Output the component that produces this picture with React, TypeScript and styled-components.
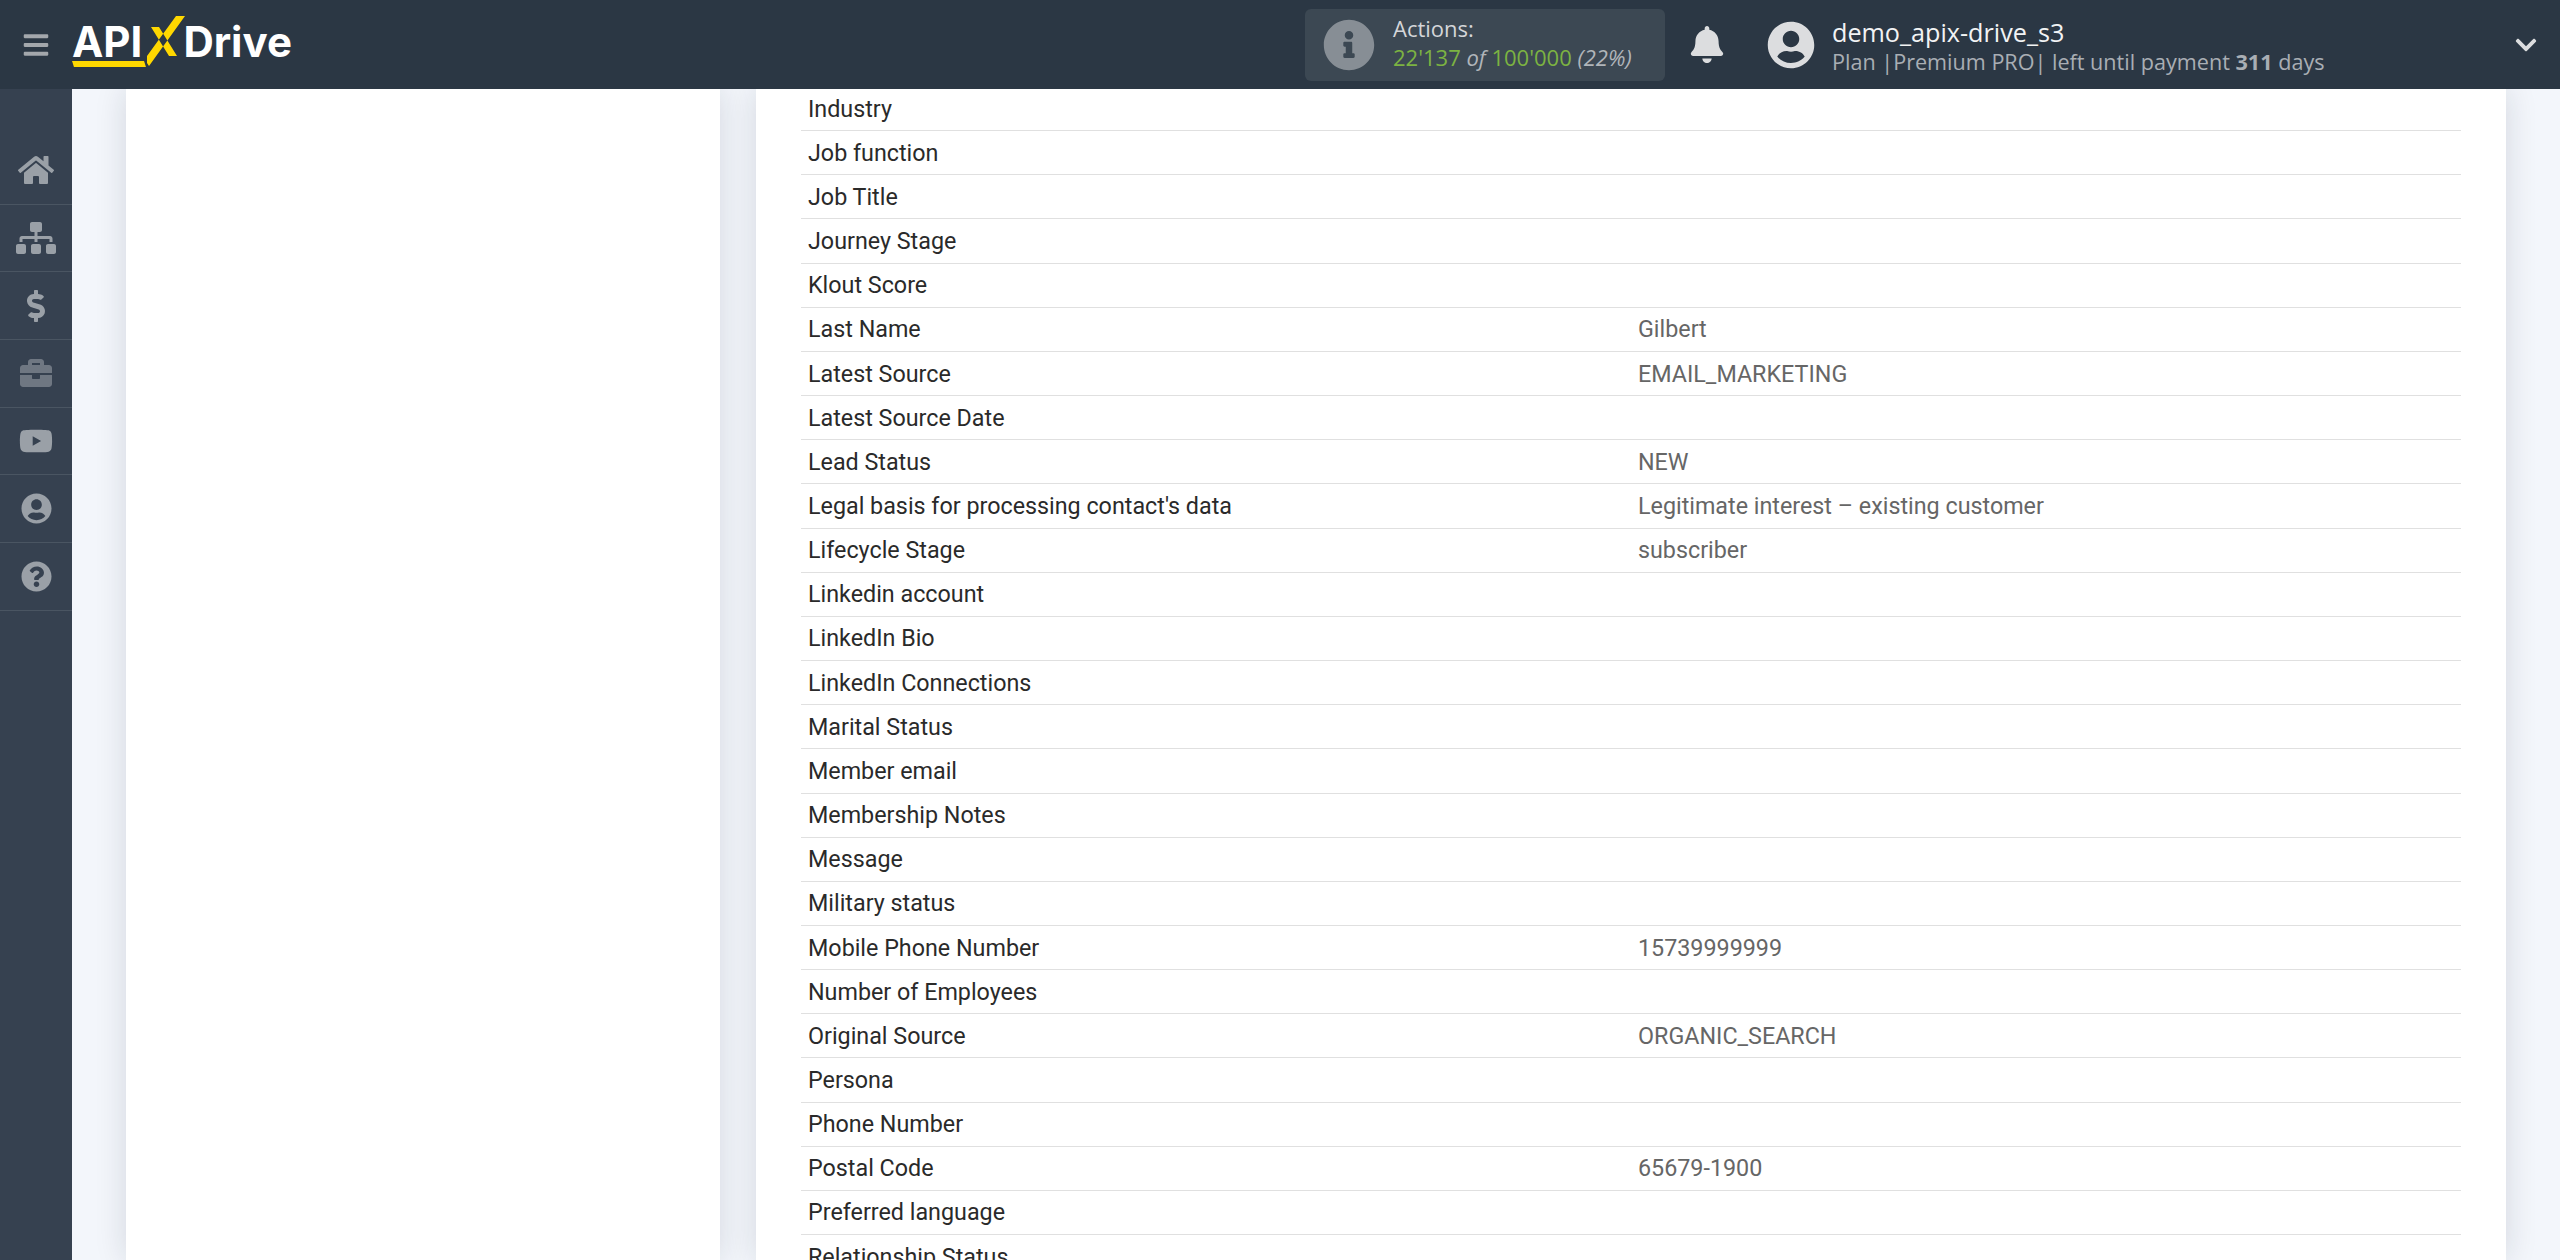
import styled, { createGlobalStyle } from "styled-components";
import {
  FaBars,
  FaBell,
  FaBriefcase,
  FaChevronDown,
  FaDollarSign,
  FaHome,
  FaInfoCircle,
  FaQuestionCircle,
  FaSitemap,
  FaUserCircle,
  FaYoutube,
} from "react-icons/fa";

const rows: [string, string?][] = [
  ["Industry"],
  ["Job function"],
  ["Job Title"],
  ["Journey Stage"],
  ["Klout Score"],
  ["Last Name", "Gilbert"],
  ["Latest Source", "EMAIL_MARKETING"],
  ["Latest Source Date"],
  ["Lead Status", "NEW"],
  ["Legal basis for processing contact's data", "Legitimate interest – existing customer"],
  ["Lifecycle Stage", "subscriber"],
  ["Linkedin account"],
  ["LinkedIn Bio"],
  ["LinkedIn Connections"],
  ["Marital Status"],
  ["Member email"],
  ["Membership Notes"],
  ["Message"],
  ["Military status"],
  ["Mobile Phone Number", "15739999999"],
  ["Number of Employees"],
  ["Original Source", "ORGANIC_SEARCH"],
  ["Persona"],
  ["Phone Number"],
  ["Postal Code", "65679-1900"],
  ["Preferred language"],
  ["Relationship Status"],
];

const navItems = [
  { icon: FaHome, size: 36 },
  { icon: FaSitemap, size: 40 },
  { icon: FaDollarSign, size: 32 },
  { icon: FaBriefcase, size: 32, dim: true },
  { icon: FaYoutube, size: 34 },
  { icon: FaUserCircle, size: 31 },
  { icon: FaQuestionCircle, size: 31 },
];

const App = () => {
  return (
    <>
      <GlobalStyle />
      <Page>
        <Header>
          <MenuButton>
            <FaBars size={28} />
          </MenuButton>
          <Logo>
            API
            <LogoUnderline />
            <LogoMark viewBox="0 0 40 52">
              <path d="M39 1 L30 1 L1 41 L1 48 L3 51 Z M5 12 L13 12 L31 41 L23 41 Z" fill="#ffd800" />
            </LogoMark>
            Drive
          </Logo>
          <ActionsBox>
            <FaInfoCircle size={52} color="#878e95" />
            <ActionsText>
              <ActionsTitle>Actions:</ActionsTitle>
              <ActionsCount>
                <Green>22'137</Green> <em>of</em> <Green>100'000</Green> <em>(22%)</em>
              </ActionsCount>
            </ActionsText>
          </ActionsBox>
          <BellIcon>
            <FaBell size={37} />
          </BellIcon>
          <UserIcon>
            <FaUserCircle size={48} />
          </UserIcon>
          <UserText>
            <UserName>demo_apix-drive_s3</UserName>
            <PlanLine>
              Plan |Premium PRO| left until payment <b>311</b> days
            </PlanLine>
          </UserText>
          <Chevron>
            <FaChevronDown size={24} />
          </Chevron>
        </Header>
        <Body>
          <Sidebar>
            {navItems.map(({ icon: Icon, size, dim }, i) => (
              <NavItem key={i} $dim={dim}>
                <Icon size={size} />
              </NavItem>
            ))}
          </Sidebar>
          <Main>
            <LeftPanel />
            <RightPanel>
              <FieldList>
                {rows.map(([label, value]) => (
                  <FieldRow key={label}>
                    <FieldLabel>{label}</FieldLabel>
                    <FieldValue>{value}</FieldValue>
                  </FieldRow>
                ))}
              </FieldList>
            </RightPanel>
          </Main>
        </Body>
      </Page>
    </>
  );
};

const GlobalStyle = createGlobalStyle`
  html, body {
    margin: 0;
    height: 100%;
    overflow: hidden;
  }
  body {
    font-family: Roboto, "Liberation Sans", sans-serif;
  }
`;

const Page = styled.div`
  width: 2560px;
  height: 1260px;
  display: flex;
  flex-direction: column;
  overflow: hidden;
  background: #f3f6fb;
`;

const Header = styled.header`
  position: relative;
  z-index: 2;
  flex: 0 0 89px;
  display: flex;
  align-items: center;
  background: #2b3744;
  color: #fff;
  font-family: "Open Sans", sans-serif;
`;

const MenuButton = styled.div`
  width: 72px;
  display: flex;
  justify-content: center;
  color: #a3a7ac;
`;

const Logo = styled.div`
  position: relative;
  width: 1233px;
  padding-bottom: 7px;
  box-sizing: border-box;
  display: flex;
  align-items: center;
  font-family: Inter, sans-serif;
  font-size: 42px;
  font-weight: 700;
  color: #fff;
`;

const LogoUnderline = styled.span`
  position: absolute;
  left: 1px;
  bottom: 7px;
  width: 72px;
  height: 6px;
  background: #ffd800;
  transform: skewX(18deg);
`;

const LogoMark = styled.svg`
  width: 40px;
  height: 52px;
  margin: 0 -3px 0 4px;
`;

const ActionsBox = styled.div`
  width: 360px;
  height: 72px;
  box-sizing: border-box;
  padding: 0 18px;
  display: flex;
  align-items: center;
  gap: 18px;
  border-radius: 6px;
  background: #3c4853;
`;

const ActionsText = styled.div`
  display: flex;
  flex-direction: column;
  margin-top: -4px;
  font-size: 22px;
  line-height: 29px;
  color: #c7cace;
`;

const ActionsTitle = styled.span`
  color: #d4d6d9;
`;

const ActionsCount = styled.span`
  white-space: nowrap;
  color: #b0b5ba;
`;

const Green = styled.span`
  color: #7cb342;
`;

const BellIcon = styled.div`
  margin-left: 25px;
  width: 34px;
  display: flex;
  justify-content: center;
  color: #dcdddf;
`;

const UserIcon = styled.div`
  margin-left: 43px;
  display: flex;
  color: #dcdddf;
`;

const UserText = styled.div`
  margin-left: 17px;
  padding-top: 3px;
  display: flex;
  flex-direction: column;
`;

const UserName = styled.span`
  font-size: 25.2px;
  line-height: 31px;
  color: #f2f3f4;
`;

const PlanLine = styled.span`
  font-size: 21.6px;
  line-height: 28px;
  color: #a9aeb4;
  white-space: nowrap;
`;

const Chevron = styled.div`
  margin-left: auto;
  margin-right: 22px;
  display: flex;
  color: #dcdddf;
`;

const Body = styled.div`
  flex: 1;
  min-height: 0;
  display: flex;
`;

const Sidebar = styled.nav`
  flex: 0 0 72px;
  box-sizing: border-box;
  padding-top: 48px;
  background: #364150;
`;

const NavItem = styled.div<{ $dim?: boolean }>`
  height: 67.67px;
  box-sizing: border-box;
  display: flex;
  align-items: center;
  justify-content: center;
  border-bottom: 1px solid #4a5562;
  color: ${({ $dim }) => ($dim ? "#6f7782" : "#9aa0a7")};
`;

const Main = styled.main`
  flex: 1;
  min-width: 0;
  display: flex;
  gap: 36px;
  padding: 0 54px;
  overflow: hidden;
`;

const LeftPanel = styled.section`
  flex: 0 0 594px;
  background: #fff;
  box-shadow: 0 0 30px rgba(20, 30, 50, 0.14);
`;

const RightPanel = styled.section`
  flex: 1;
  min-width: 0;
  box-sizing: border-box;
  padding: 0 45px;
  background: #fff;
  box-shadow: 0 0 30px rgba(20, 30, 50, 0.14);
`;

const FieldList = styled.div`
  margin-top: -2px;
`;

const FieldRow = styled.div`
  height: 44.16px;
  box-sizing: border-box;
  display: flex;
  align-items: center;
  padding-left: 7px;
  border-bottom: 1px solid #e0e0e0;
  font-size: 23.3px;
`;

const FieldLabel = styled.span`
  width: 830px;
  color: #2a2a2a;
  white-space: nowrap;
`;

const FieldValue = styled.span`
  color: #666;
  white-space: nowrap;
`;

export default App;
